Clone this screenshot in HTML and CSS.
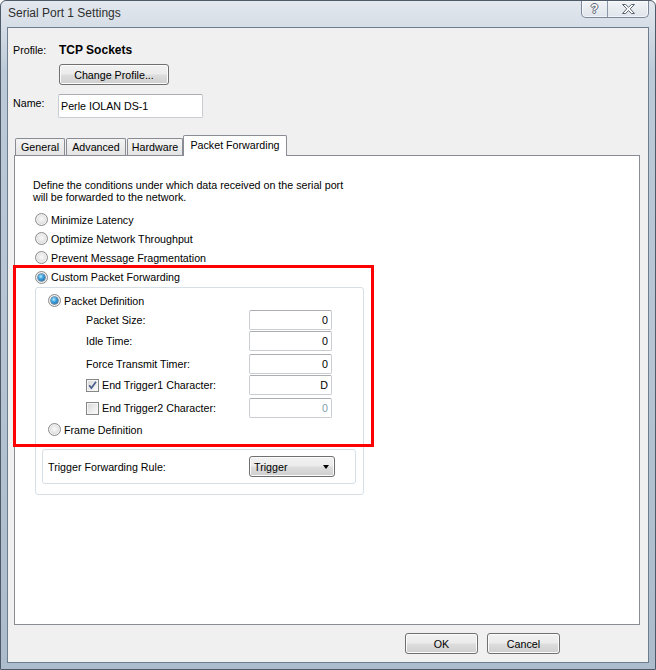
FILE: index.html
```html
<!DOCTYPE html>
<html>
<head>
<meta charset="utf-8">
<title>Serial Port 1 Settings</title>
<link rel="stylesheet" href="styles.css">
</head>
<body>
<div class="window">
  <div class="titlebar">
    <span class="title">Serial Port 1 Settings</span>
    <div class="caption">
      <div class="cap-btn cap-help">?</div>
      <div class="cap-btn cap-close">
        <svg width="13" height="10" viewBox="0 0 13 10"><path d="M0.5 0.5 H3.7 L6.5 3.3 L9.3 0.5 H12.5 L8.2 4.8 L12.5 9.5 H9.3 L6.5 6.5 L3.7 9.5 H0.5 L4.8 4.8 Z" fill="#fff" stroke="#59636f" stroke-width="1" stroke-linejoin="round"/></svg>
      </div>
    </div>
  </div>
  <div class="client">
    <div class="profile-row"><span class="label">Profile:</span><span class="profile-name">TCP Sockets</span></div>
    <button class="btn btn-change">Change Profile...</button>
    <div class="name-row"><span class="label name-label">Name:</span><div class="textbox name-box">Perle IOLAN DS-1</div></div>
    <div class="tabs">
      <div class="tab tab-general">General</div>
      <div class="tab tab-advanced">Advanced</div>
      <div class="tab tab-hardware">Hardware</div>
      <div class="tab tab-active">Packet Forwarding</div>
    </div>
    <div class="panel">
      <p class="desc">Define the conditions under which data received on the serial port<br>will be forwarded to the network.</p>
      <div class="opt opt-first"><span class="radio"></span>Minimize Latency</div>
      <div class="opt"><span class="radio"></span>Optimize Network Throughput</div>
      <div class="opt"><span class="radio"></span>Prevent Message Fragmentation</div>
      <div class="opt opt-custom"><span class="radio on"></span>Custom Packet Forwarding</div>
      <div class="group">
        <div class="opt opt-sub"><span class="radio on"></span>Packet Definition</div>
        <div class="field"><span class="field-label">Packet Size:</span><div class="textbox num">0</div></div>
        <div class="field gap-s"><span class="field-label">Idle Time:</span><div class="textbox num">0</div></div>
        <div class="field gap-l"><span class="field-label">Force Transmit Timer:</span><div class="textbox num">0</div></div>
        <div class="field gap-s"><span class="field-label"><span class="check"><svg width="11" height="11" viewBox="0 0 11 11"><path d="M2.2 5.2 L4.4 8 L9 1.8" fill="none" stroke="#4b5f8c" stroke-width="1.7"/></svg></span>End Trigger1 Character:</span><div class="textbox num">D</div></div>
        <div class="field gap-l"><span class="field-label"><span class="check"></span>End Trigger2 Character:</span><div class="textbox num disabled">0</div></div>
        <div class="opt opt-sub opt-frame"><span class="radio"></span>Frame Definition</div>
        <div class="subgroup"><span class="sub-label">Trigger Forwarding Rule:</span><div class="combo">Trigger<span class="arrow"></span></div></div>
      </div>
      <div class="highlight"></div>
    </div>
    <div class="buttons"><button class="btn btn-dlg">OK</button><button class="btn btn-dlg">Cancel</button></div>
  </div>
</div>
</body>
</html>
```
FILE: styles.css
```css
* { box-sizing: border-box; }
html, body { margin: 0; padding: 0; background: #ffffff; }
body { font-family: "Liberation Sans", Arial, sans-serif; font-size: 10.7px; color: #000; }

.window {
  width: 656px; height: 670px;
  border: 1px solid #4e5a67;
  border-radius: 6px 6px 0 0;
  background: linear-gradient(to bottom, #e3e8ee 0px, #d5dde6 26px, #bccad8 70px, #adbccc 100%);
  display: flex; flex-direction: column;
}
.titlebar { height: 26px; flex: none; display: flex; justify-content: space-between; align-items: flex-start; padding-left: 7px; }
.title { font-size: 12px; line-height: 13px; margin-top: 6px; color: #2e2e2e; }
.caption {
  display: flex; margin-right: 6px; height: 17px;
  border: 1px solid #7b8899; border-top: none;
  border-radius: 0 0 5px 5px; overflow: hidden;
  background: linear-gradient(to bottom, #f1f4f7, #dfe5eb);
  box-shadow: inset 0 0 0 1px rgba(255,255,255,0.6);
}
.cap-btn { height: 16px; display: flex; align-items: center; justify-content: center; }
.cap-help {
  width: 26px; border-right: 1px solid #8a97a7;
  font-weight: bold; font-size: 12px; color: #fff;
  text-shadow: 1px 0 0 #5a6470, -1px 0 0 #5a6470, 0 1px 0 #5a6470, 0 -1px 0 #5a6470;
}
.cap-close { width: 40px; }

.client {
  flex: 1; margin: 0 6px 6px 6px;
  border: 1px solid #6e7d8d;
  background: #f0f0f0;
}

.profile-row { margin-top: 15px; height: 14px; line-height: 14px; display: flex; }
.label { padding-left: 5px; width: 51px; flex: none; }
.profile-name { font-weight: bold; font-size: 12px; }

.btn {
  font-family: inherit; font-size: 10.7px; color: #000; padding: 0;
  border: 1px solid #707070; border-radius: 3px;
  background: linear-gradient(to bottom, #f2f2f2 0%, #ebebeb 48%, #dddddd 52%, #cfcfcf 100%);
  box-shadow: inset 0 0 0 1px #fbfbfb;
}
.btn-change { display: block; margin: 7px 0 0 51px; width: 110px; height: 21px; }

.name-row { margin-top: 9px; height: 24px; display: flex; }
.name-label { width: 50px; margin-top: 2px; line-height: 14px; }
.textbox {
  background: #fff;
  border: 1px solid #c9ccd1; border-top-color: #abadb3;
  border-radius: 2px;
}
.name-box { width: 145px; height: 24px; padding-left: 2px; line-height: 22px; }

.tabs { margin-top: 17px; height: 20px; display: flex; align-items: flex-end; padding-left: 7px; position: relative; z-index: 1; }
.tab {
  height: 17px; line-height: 16px; text-align: center;
  border: 1px solid #898c95; border-bottom: none;
  border-radius: 2px 2px 0 0;
  background: linear-gradient(to bottom, #f4f4f4, #e4e4e4);
  margin-right: 1px;
}
.tab-general { width: 50px; }
.tab-advanced { width: 60px; }
.tab-hardware { width: 56px; }
.tab-active { width: 104px; height: 21px; line-height: 18px; margin-left: -1px; margin-bottom: -1px; background: #fff; }

.panel {
  margin-left: 6px; width: 626px; height: 470px;
  border: 1px solid #898c95; background: #fff;
  position: relative;
}
.desc { margin: 0; padding: 23px 0 0 18px; line-height: 12px; }

.opt { display: flex; align-items: center; height: 19px; padding-left: 20px; }
.opt-first { margin-top: 7px; }
.opt-custom { height: 20px; }
.radio {
  flex: none; position: relative;
  width: 13px; height: 13px; margin-right: 3px;
  border-radius: 50%; border: 1px solid #8a8b8b;
  background: radial-gradient(circle at 50% 45%, #fafafa 0%, #e6e6e6 45%, #c8c8c8 100%);
  box-shadow: inset 0 0 0 1px #f2f2f2;
}
.radio.on::after {
  content: ""; position: absolute; left: 2px; top: 2px;
  width: 7px; height: 7px; border-radius: 50%;
  background: radial-gradient(circle at 40% 35%, #b7ecff 0%, #3da3e0 40%, #14528a 100%);
  box-shadow: 0 0 0 0.5px #1d4f78;
}

.group {
  margin-left: 20px; width: 329px; height: 208px;
  border: 1px solid #d5dfe5; border-radius: 3px;
}
.opt-sub { padding-left: 12px; margin-top: 3px; }
.field { display: flex; align-items: center; height: 20px; }
.gap-s { margin-top: 1px; }
.gap-l { margin-top: 3px; }
.field-label { width: 213px; flex: none; padding-left: 50px; display: flex; align-items: center; }
.check {
  flex: none; width: 13px; height: 13px; margin-right: 3px;
  border: 1px solid #858686;
  background: linear-gradient(135deg, #d6d6d6 0%, #eeeeee 60%, #fdfdfd 100%);
  box-shadow: inset 0 0 0 1px #f6f6f6;
  display: flex;
}
.num { width: 83px; height: 20px; line-height: 18px; text-align: right; padding-right: 3px; }
.num.disabled { color: #7fa3b0; }
.opt-frame { margin-top: 2px; }

.subgroup {
  margin: 10px 0 0 6px; width: 314px; height: 35px;
  border: 1px solid #d5dfe5; border-radius: 3px;
  display: flex; align-items: center; padding-left: 5px;
}
.sub-label { width: 201px; flex: none; }
.combo {
  width: 86px; height: 21px; padding: 0 5px 0 4px;
  display: flex; align-items: center; justify-content: space-between;
  border: 1px solid #707070; border-radius: 3px;
  background: linear-gradient(to bottom, #f2f2f2 0%, #ebebeb 48%, #dddddd 52%, #cfcfcf 100%);
  box-shadow: inset 0 0 0 1px #fbfbfb;
}
.arrow { width: 0; height: 0; border-left: 3.5px solid transparent; border-right: 3.5px solid transparent; border-top: 4px solid #000; }

.highlight {
  position: absolute; left: -2px; top: 109px;
  width: 361px; height: 182px;
  border: 3px solid #ff0000;
}

.buttons { display: flex; justify-content: flex-end; gap: 9px; padding-right: 88px; margin-top: 8px; }
.btn-dlg { width: 73px; height: 21px; }
```
